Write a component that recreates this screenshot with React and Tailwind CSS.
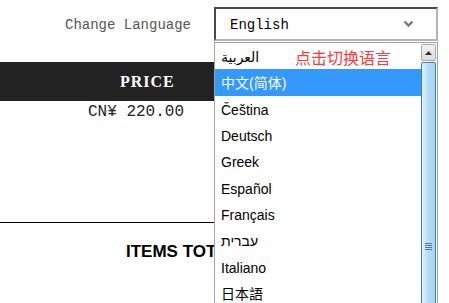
import React from "react";

const languages = [
  "العربية",
  "中文(简体)",
  "Čeština",
  "Deutsch",
  "Greek",
  "Español",
  "Français",
  "עברית",
  "Italiano",
  "日本語",
];

const mono = "font-['Liberation_Mono','Courier_New',monospace]";
const listFont =
  "font-['Liberation_Sans','DejaVu_Sans','Noto_Sans_CJK_SC',sans-serif]";

export default function App() {
  return (
    <div className="relative w-[449px] h-[303px] overflow-hidden bg-white">
      {/* language switch */}
      <div className="flex items-center pt-[7px]">
        <div className={`w-[214px] pl-[65px] pt-[3px] text-[14px] text-[#555] ${mono}`}>
          Change Language
        </div>
        <div className="flex items-center justify-between w-[224px] h-[34px] border-2 border-t-[#4a4a4a] border-l-[#4a4a4a] border-r-[#b4b4b4] border-b-[#b4b4b4] pl-[14px] pr-[22px]">
          <span className={`pt-[2px] text-[14px] text-black ${mono}`}>English</span>
          <svg width="11" height="8" viewBox="0 0 11 8">
            <path d="M1.5 1.5 L5.5 5.5 L9.5 1.5" fill="none" stroke="#777" strokeWidth="2.4" />
          </svg>
        </div>
      </div>

      {/* cart table (its right part sits under the open list) */}
      <div className="w-[214px] overflow-hidden mt-[21px]">
        <div className="flex h-[39px] bg-[#222] items-center pl-[120px]">
          <div className="text-white font-bold text-[16px] tracking-[1px] font-['Liberation_Serif','Times_New_Roman',serif]">
            PRICE
          </div>
        </div>
        <div className="h-[122px] border-b border-black pl-[88px] pt-[2px]">
          <div className={`text-[16px] text-[#222] leading-[19px] whitespace-nowrap ${mono}`}>
            CN¥&nbsp;220.00
          </div>
        </div>
        <div className="pt-[19px] pl-[126px] h-[60px]">
          <div className="text-[17px] font-bold leading-[20px] text-black whitespace-nowrap font-['Liberation_Sans',Arial,sans-serif]">
            ITEMS TOTAL
          </div>
        </div>
      </div>

      {/* open dropdown list */}
      <div className="absolute left-[214px] top-[42px] w-[224px] h-[270px] flex bg-white border border-[#a3a3a3]">
        <div className={`relative flex-1 text-[14px] text-black ${listFont}`}>
          {languages.map((lang, i) => (
            <div
              key={lang}
              className={`h-[26.3px] flex items-center pl-[6px] pt-[3px] ${
                i === 1 ? "bg-[#3399ff] text-white" : ""
              }`}
            >
              {lang}
            </div>
          ))}
          <span className="absolute left-[80px] top-[3px] text-[16px] leading-[22px] text-[#f53c3c] font-['Noto_Sans_CJK_SC',sans-serif]">
            点击切换语言
          </span>
        </div>
        <div className="w-[16px] flex flex-col gap-[1px] pt-[1px] pr-[1px]">
          <div className="h-[17px] flex items-center justify-center border border-[#a8a8a8] rounded-[2px] bg-gradient-to-b from-[#f4f4f4] to-[#dcdcdc]">
            <svg width="7" height="4" viewBox="0 0 7 4">
              <path d="M0 4 L3.5 0 L7 4 Z" fill="#333" />
            </svg>
          </div>
          <div className="flex-1 border border-[#3c7fb1] rounded-[2px] bg-gradient-to-r from-[#dff0fb] via-[#b6dcf4] to-[#a6d4f2] pt-[180px]">
            <div className="flex flex-col items-center gap-[1px]">
              <div className="w-[7px] h-[1px] bg-[#4a7aa3]" />
              <div className="w-[7px] h-[1px] bg-[#4a7aa3]" />
              <div className="w-[7px] h-[1px] bg-[#4a7aa3]" />
              <div className="w-[7px] h-[1px] bg-[#4a7aa3]" />
            </div>
          </div>
        </div>
      </div>
    </div>
  );
}
